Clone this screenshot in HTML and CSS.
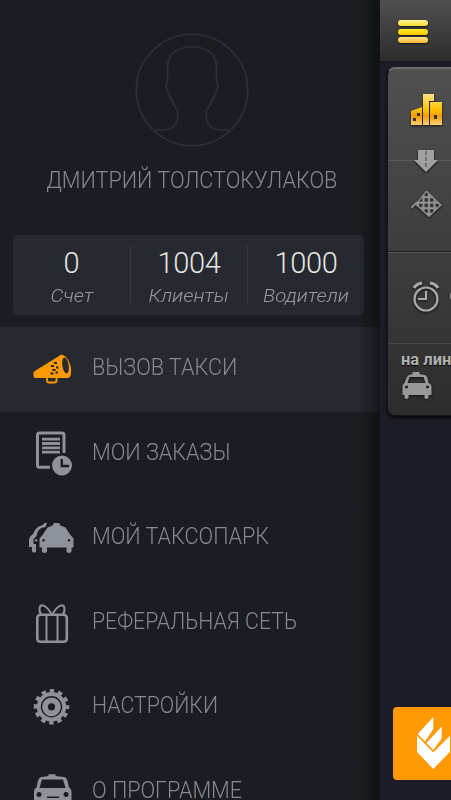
FILE: index.html
```html
<!DOCTYPE html>
<html lang="ru">
<head>
<meta charset="utf-8">
<title>Такси</title>
<link rel="stylesheet" href="styles.css">
</head>
<body>
<div class="app">
  <aside class="drawer">
    <header class="profile">
      <svg class="avatar" viewBox="0 0 114 114"><circle cx="57" cy="57" r="55.7"/><path d="M19 97h9c12 0 16-9 14.500-20C36 69 36 64 33.500 60 31 56 30 50 32.500 49V34C33 20 43 14 57 14s24 6 24.500 20v15c2.500 1 1.500 7-1 11C78 64 78 69 71.500 77 70 88 74 97 86 97h9"/></svg>
      <h1 class="name"><span>ДМИТРИЙ ТОЛСТОКУЛАКОВ</span></h1>
    </header>
    <div class="stats">
      <div class="stat"><b>0</b><i>Счет</i></div>
      <div class="stat"><b>1004</b><i>Клиенты</i></div>
      <div class="stat"><b>1000</b><i>Водители</i></div>
    </div>
    <nav class="menu">
      <a class="item active"><svg class="icon" viewBox="0 0 50 50"><path fill="#ff9a05" d="M9 29.500 34 14q2-2 4-1c5 2 9 11 8 18q0 5-4 5H10.500C8 36 8 30.500 9 29.500z"/><ellipse cx="40.500" cy="23.500" rx="3.200" ry="8" fill="#262930" transform="rotate(-9 40.500 23.500)"/><path d="M22 36v2.500q0 2 2 2h5.500q2 0 2-2V36" fill="none" stroke="#ff9a05" stroke-width="1.800"/><path fill="#262930" d="M29 20h3v2h-3zm-3 3h3v2h-3zm5 1.500h2.500v2H31zm-3.500 2.500h3v2h-3zm-2 3.500h3v2h-3zm5-1h2.500v2h-2.500z"/></svg><span>ВЫЗОВ ТАКСИ</span></a>
      <a class="item"><svg class="icon" viewBox="0 0 50 50"><path d="M25 40.200H14.500q-2 0-2-2V8q0-2 2-2h22.500q2 0 2 2v18" fill="none" stroke="#8d929b" stroke-width="3"/><path d="M17 12.200h18M17 16.500h18M17 20.800h18M17 25.100h18" stroke="#8d929b" stroke-width="2.800"/><circle cx="37" cy="38.500" r="10" fill="#8d929b"/><path d="M36.800 32v7H44" fill="none" stroke="#1c1d22" stroke-width="2.400"/></svg><span>МОИ ЗАКАЗЫ</span></a>
      <a class="item"><svg class="icon" viewBox="0 0 50 50"><path fill="#8d929b" fill-rule="evenodd" d="m17.500 24 5-7.500 5-2L29 12h5l1.500 2.500 5 2 5 7.500 3 3.500v9h-2v4q-2.500 3-5 0v-4H22v4q-2.500 3-5 0v-4h-2.500v-9zM18.500 28a1.300 1.300 0 1 0 .1 0zm25.500 0a1.300 1.300 0 1 0 .1 0z"/><path fill="#8d929b" d="M22 12q-3-1-4 2-7 1-10 9-4 3-4 6v7h3v4q1 2.500 4 1v-8H8.500v-5l3-3q1-6 5-8l4-1zM11 28a1.300 1.300 0 1 0 .1 0z"/></svg><span>МОЙ ТАКСОПАРК</span></a>
      <a class="item"><svg class="icon" viewBox="0 0 50 50"><g fill="none" stroke="#8d929b" stroke-width="2.600"><rect x="12.300" y="18.800" width="29.500" height="27" rx="3"/><path stroke-width="2" d="M21.500 19v26M32.500 19v26M27 19c-6-11-12.500-12-12.500-6 0 3 0 4 2 5M27 19c6-11 12.500-12 12.500-6 0 3 0 4-2 5"/></g></svg><span class="wide">РЕФЕРАЛЬНАЯ СЕТЬ</span></a>
      <a class="item"><svg class="icon" viewBox="0 0 50 50"><g fill="none" stroke="#8d929b" transform="translate(26.500 26.800)"><circle r="16" stroke-width="3.500" stroke-dasharray="4.500 3.878" stroke-dashoffset="2.250"/><circle r="12.700" stroke-width="4"/><circle r="6.500" stroke-width="5.800"/></g></svg><span class="wide">НАСТРОЙКИ</span></a>
      <a class="item"><svg class="icon" viewBox="0 0 50 50"><path fill="#8d929b" fill-rule="evenodd" d="M23.500 11V9.300h7V11l8 1q3 0 4 4l1.500 6.500q2.500 1 2.500 4.500v15H9V27q0-3.500 2.500-4.500L13 16q1-4 4-4zM17 14.500l-2.500 8.500h26L38 14.500zm-3 12.500a2.500 2.500 0 1 0 .1 0zm27 0a2.500 2.500 0 1 0 .1 0zM22 31.500V33h12v-1.500z"/></svg><span>О ПРОГРАММЕ</span></a>
    </nav>
  </aside>
  <main class="page">
    <header class="bar"><div class="burger"><i></i><i></i><i></i></div></header>
    <section class="order">
      <svg class="tile city" viewBox="0 0 32 32"><defs><linearGradient id="gold" x2="0" y2="1"><stop stop-color="#ffe184"/><stop offset=".5" stop-color="#ffc400"/><stop offset=".72" stop-color="#f59b05"/><stop offset="1" stop-color="#ffd17a"/></linearGradient></defs><path fill="url(#gold)" d="M0 17 11 13V31H0zM12 0h11v7h-5v24h-6zM19 8h12v23H19z"/><path d="M6 19h3v3H6zm-4 5h3v3H2zm21-3h3v4h-3z" fill="#333"/></svg>
      <svg class="tile arrow" viewBox="0 0 26 24"><path fill="#a0a0a0" d="M5 1h16v10h4L13 23 1 11h4z"/><path d="M13 2v18" stroke="#555" stroke-width="1.200" stroke-dasharray="4 2"/></svg>
      <svg class="tile flag" viewBox="0 0 31 28"><defs><pattern id="chk" x="2.500" y="1.700" width="5.500" height="5.500" patternUnits="userSpaceOnUse"><rect width="5.500" height="5.500" fill="#929292"/><rect width="3.500" height="3.500" rx="1" fill="#303030"/></pattern></defs><path d="M15.500 0 30 14 18 25.500 5 13.500z" fill="url(#chk)" stroke="#929292" stroke-width="1.200"/><path d="m0 17 6.500-6" stroke="#929292" stroke-width="2"/></svg>
      <div class="time"><svg class="tile clock" viewBox="0 0 28 32"><g fill="none" stroke="#aaa" stroke-width="2.200"><circle cx="14" cy="18" r="11.500"/><path d="M14 10v8H6"/><path d="M2 7q2-4 8-5M26 7q-2-4-8-5" stroke-width="3.200"/></g></svg><span class="ring"></span></div>
      <div class="online"><b>на линии</b><svg class="tile cab" viewBox="0 0 30 30"><path fill="#999" fill-rule="evenodd" d="M11 3V1h7v2l5 1q2 0 3 3l1 5q3 1 3 4v8h-3v3q-2 2-4 0v-3H7v3q-2 2-4 0v-3H1v-8q0-3 2-4l2-5q1-3 3-3zM8 6l-2 6h18l-2-6zM5 14.500a1.500 1.500 0 1 0 .1 0zm21 0a1.500 1.500 0 1 0 .1 0z"/></svg></div>
    </section>
    <div class="promo"><svg viewBox="0 0 36 54"><path fill="#fff" d="M2.700 18 18.300 1v12L10 25.500zM11.500 27 26.700 10.500V22.500L18.300 34zM2 19.700l16.300 16.800L35 19.700v16L18.300 53 2 36z"/></svg></div>
  </main>
</div>
</body>
</html>
```
FILE: styles.css
```css
* { box-sizing: border-box; }
body { margin: 0; background: #1b1c25; overflow: hidden; font-family: Roboto, "Noto Sans", sans-serif; }
.app { display: flex; width: 451px; height: 800px; overflow: hidden; }
.drawer { flex: 0 0 380px; height: 800px; overflow: hidden; background: #1c1d22; position: relative; }
.drawer::after { content: ""; position: absolute; inset: 0 0 0 auto; width: 22px; background: linear-gradient(90deg, transparent, rgba(8, 9, 13, .55)); }
.profile { height: 235px; padding: 33px 0 0 3px; display: flex; flex-direction: column; align-items: center; }
.avatar { width: 114px; height: 114px; fill: none; stroke: #2c3038; stroke-width: 1.700; }
.name { margin: 18px 0 0; font-weight: 300; font-size: 24px; line-height: 30px; color: #868990; white-space: nowrap; }
.name span { display: inline-block; transform: scaleX(.9); }
.stats { display: grid; grid-template-columns: 118px 117px 116px; width: 351px; height: 80px; margin: 0 0 12px 13px; padding-top: 11px; border-radius: 5px; background: #262930; }
.stat { height: 57px; display: flex; flex-direction: column; align-items: center; border-right: 1px solid #363a42; }
.stat:last-child { border: 0; }
.stat b { font-weight: 300; font-size: 29px; line-height: 34px; color: #e4e4e4; letter-spacing: -.3px; }
.stat i { font-size: 18px; font-weight: 300; line-height: 31px; color: #9699a1; transform: scaleX(1.13); }
.item { height: 84.500px; display: flex; align-items: center; padding: 0 0 4px 25px; font-size: 24px; font-weight: 300; color: #868990; white-space: nowrap; }
.active { background: #262930; }
.icon { width: 50px; height: 50px; flex: none; overflow: visible; margin-right: 17px; }
.item span { transform: scaleX(.9); transform-origin: left; }
.item .wide { transform: scaleX(.887); }
.page { flex: 0 0 71px; height: 800px; overflow: hidden; background: #1b1c25; }
.bar { height: 62px; padding: 20px 0 0 18px; background: linear-gradient(#505050, #2d2d2d); border-bottom: 1px solid #171717; }
.burger { display: flex; flex-direction: column; gap: 2.600px; width: 30px; }
.burger i { height: 6px; border-radius: 3px; background: linear-gradient(#fff493, #ffdc35); box-shadow: 0 1px 2px #111; }
.burger i:nth-child(2) { background: linear-gradient(#ffeb22, #ffc900); }
.burger i:nth-child(3) { background: linear-gradient(#ffe289, #ffb832); }
.order { margin: 5px 0 0 7px; width: 90px; height: 349px; border-radius: 8px; background: linear-gradient(#5a5a5a, #5a5a5a) 0 91px / 100% 1px no-repeat, linear-gradient(#505050, #2d2d2d); border: 1px solid #151519; border-top: 2px solid #6c6c6c; box-shadow: 0 2px 3px #08080d; }
.tile { display: block; filter: drop-shadow(0 1px 1px #111); }
.city { width: 32px; height: 32px; margin: 25px 0 0 23px; }
.arrow { width: 26px; height: 24px; margin: 23px 0 0 25px; }
.flag { width: 31px; height: 28px; margin: 18px 0 0 23px; }
.time { display: flex; gap: 10px; height: 92px; margin-top: 32px; padding: 29px 0 0 24px; border-top: 1px solid #202020; box-shadow: inset 0 1px #555; }
.clock { width: 28px; height: 32px; flex: none; }
.ring { width: 14px; height: 14px; margin-top: 8px; border: 2px solid #999; border-radius: 50%; flex: none; }
.online { border-top: 1px solid #484848; padding: 5px 0 0 13px; white-space: nowrap; }
.online b { display: block; font-size: 16.500px; line-height: 22px; color: #b1b1b1; text-shadow: 0 1px 1px #000; }
.cab { width: 31px; height: 30px; }
.promo { margin: 291px 0 0 13px; width: 90px; height: 73px; padding: 9px 0 0 22px; background: #ff9a05; border-radius: 4px; }
.promo svg { width: 36px; height: 54px; display: block; }
```
